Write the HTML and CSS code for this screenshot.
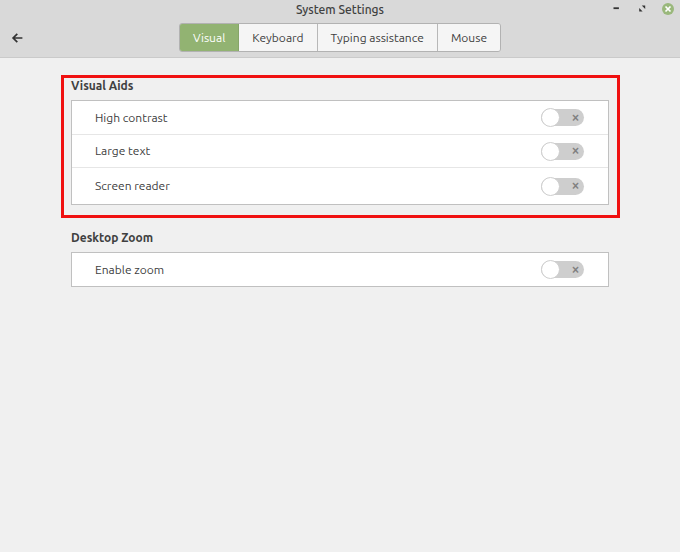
FILE: index.html
```html
<!DOCTYPE html>
<html lang="en">
<head>
    <meta charset="UTF-8">
    <meta name="viewport" content="width=device-width, initial-scale=1.0">
    <title>System Settings</title>
    <link rel="stylesheet" href="styles.css">
</head>
<body>
    <header class="header">
        <div class="titlebar">
            <h1 class="title">System Settings</h1>
            <div class="window-buttons">
                <button type="button" class="icon-btn" aria-label="Minimize">
                    <svg width="12" height="12" viewBox="0 0 12 12"><path d="M3.5 5.2h5.4" stroke="#333" stroke-width="1.8"/></svg>
                </button>
                <button type="button" class="icon-btn" aria-label="Maximize">
                    <svg width="12" height="12" viewBox="0 0 12 12"><path d="M5.8 2.6h3.4v3.4zM3.2 5v3.4h3.4z" fill="#333"/></svg>
                </button>
                <button type="button" class="icon-btn" aria-label="Close">
                    <svg width="12" height="12" viewBox="0 0 12 12"><circle cx="6" cy="6" r="6" fill="#9ab87c"/><path d="M3.5 3.5l5 5M8.5 3.5L3.5 8.5" stroke="#fff" stroke-width="1.7"/></svg>
                </button>
            </div>
        </div>
        <div class="toolbar">
            <button type="button" class="icon-btn" aria-label="Back">
                <svg width="12" height="12" viewBox="0 0 12 12"><path d="M11.4 6H2.5M6.3 1.8L2.1 6l4.2 4.2" fill="none" stroke="#333" stroke-width="1.7"/></svg>
            </button>
            <nav class="tabs">
                <button type="button" class="tab active">Visual</button>
                <button type="button" class="tab">Keyboard</button>
                <button type="button" class="tab">Typing assistance</button>
                <button type="button" class="tab">Mouse</button>
            </nav>
        </div>
    </header>

    <main class="content">
        <section class="group highlight">
            <h2 class="group-title">Visual Aids</h2>
            <div class="panel">
                <div class="row">
                    <label for="contrast">High contrast</label>
                    <input type="checkbox" class="switch" id="contrast">
                </div>
                <div class="row">
                    <label for="large">Large text</label>
                    <input type="checkbox" class="switch" id="large">
                </div>
                <div class="row tall">
                    <label for="reader">Screen reader</label>
                    <input type="checkbox" class="switch" id="reader">
                </div>
            </div>
        </section>

        <section class="group">
            <h2 class="group-title">Desktop Zoom</h2>
            <div class="panel">
                <div class="row">
                    <label for="zoom">Enable zoom</label>
                    <input type="checkbox" class="switch" id="zoom">
                </div>
            </div>
        </section>
    </main>
</body>
</html>
```
FILE: styles.css
```css
* {
    box-sizing: border-box;
}

body {
    margin: 0;
    background-color: #f0f0f0;
    color: #404040;
    font-family: Ubuntu, "Noto Sans", sans-serif;
    font-size: 12px;
    line-height: 14px;
}

button {
    font: inherit;
    color: inherit;
}

h1, h2 {
    margin: 0;
    font-size: 12px;
}

.header {
    padding-bottom: 5px;
    background-color: #d9d9d9;
    border-bottom: 1px solid #cacaca;
}

.titlebar, .toolbar {
    display: grid;
    grid-template-columns: 1fr auto 1fr;
    align-items: center;
}

.titlebar {
    align-items: start;
    padding: 3px 6px;
}

.title {
    grid-column: 2;
    font-weight: 500;
    color: #404040;
}

.window-buttons {
    display: flex;
    justify-content: flex-end;
    gap: 14px;
}

.icon-btn {
    display: flex;
    justify-self: start;
    padding: 0;
    border: none;
    background: none;
}

.toolbar {
    padding: 3px 11px 0;
}

.tabs {
    display: flex;
    border: 1px solid #b2b2b2;
    border-radius: 3px;
    overflow: hidden;
}

.tab {
    padding: 7px 13px 6px;
    border: none;
    border-right: 1px solid #b8b8b8;
    background-color: #f5f5f5;
}

.tab:last-child {
    border-right: none;
}

.tab.active {
    background-color: #92b372;
    border-color: #86a569;
    color: #fff;
}

.content {
    padding: 17px 60px 17px 61px;
}

.group {
    padding: 12px 11px 12px 10px;
}

/* red frame round the group */
.highlight {
    padding: 0 8px 10px 7px;
    border: 3px solid #f01010;
}

.group-title {
    margin-bottom: 6px;
    font-weight: 700;
    line-height: 16px;
}

.panel {
    border: 1px solid #c0c0c0;
    background-color: #fff;
}

.row {
    display: flex;
    align-items: center;
    justify-content: space-between;
    min-height: 33px;
    padding: 0 24px 0 23px;
}

.row + .row {
    border-top: 1px solid #e6e6e6;
}

.row.tall {
    min-height: 37px;
}

.switch {
    appearance: none;
    display: flex;
    align-items: center;
    justify-content: space-between;
    width: 43px;
    height: 17px;
    margin: 0;
    padding-right: 5px;
    border-radius: 9px;
    background-color: #cecece;
}

.switch::before {
    content: "";
    width: 17px;
    height: 17px;
    border: 1px solid #cecece;
    border-radius: 50%;
    background-color: #fff;
}

.switch::after {
    content: "×";
    color: #808080;
    font-size: 12px;
    font-weight: 700;
}

.switch:checked {
    flex-direction: row-reverse;
    padding: 0 0 0 5px;
    background-color: #92b372;
}
```
